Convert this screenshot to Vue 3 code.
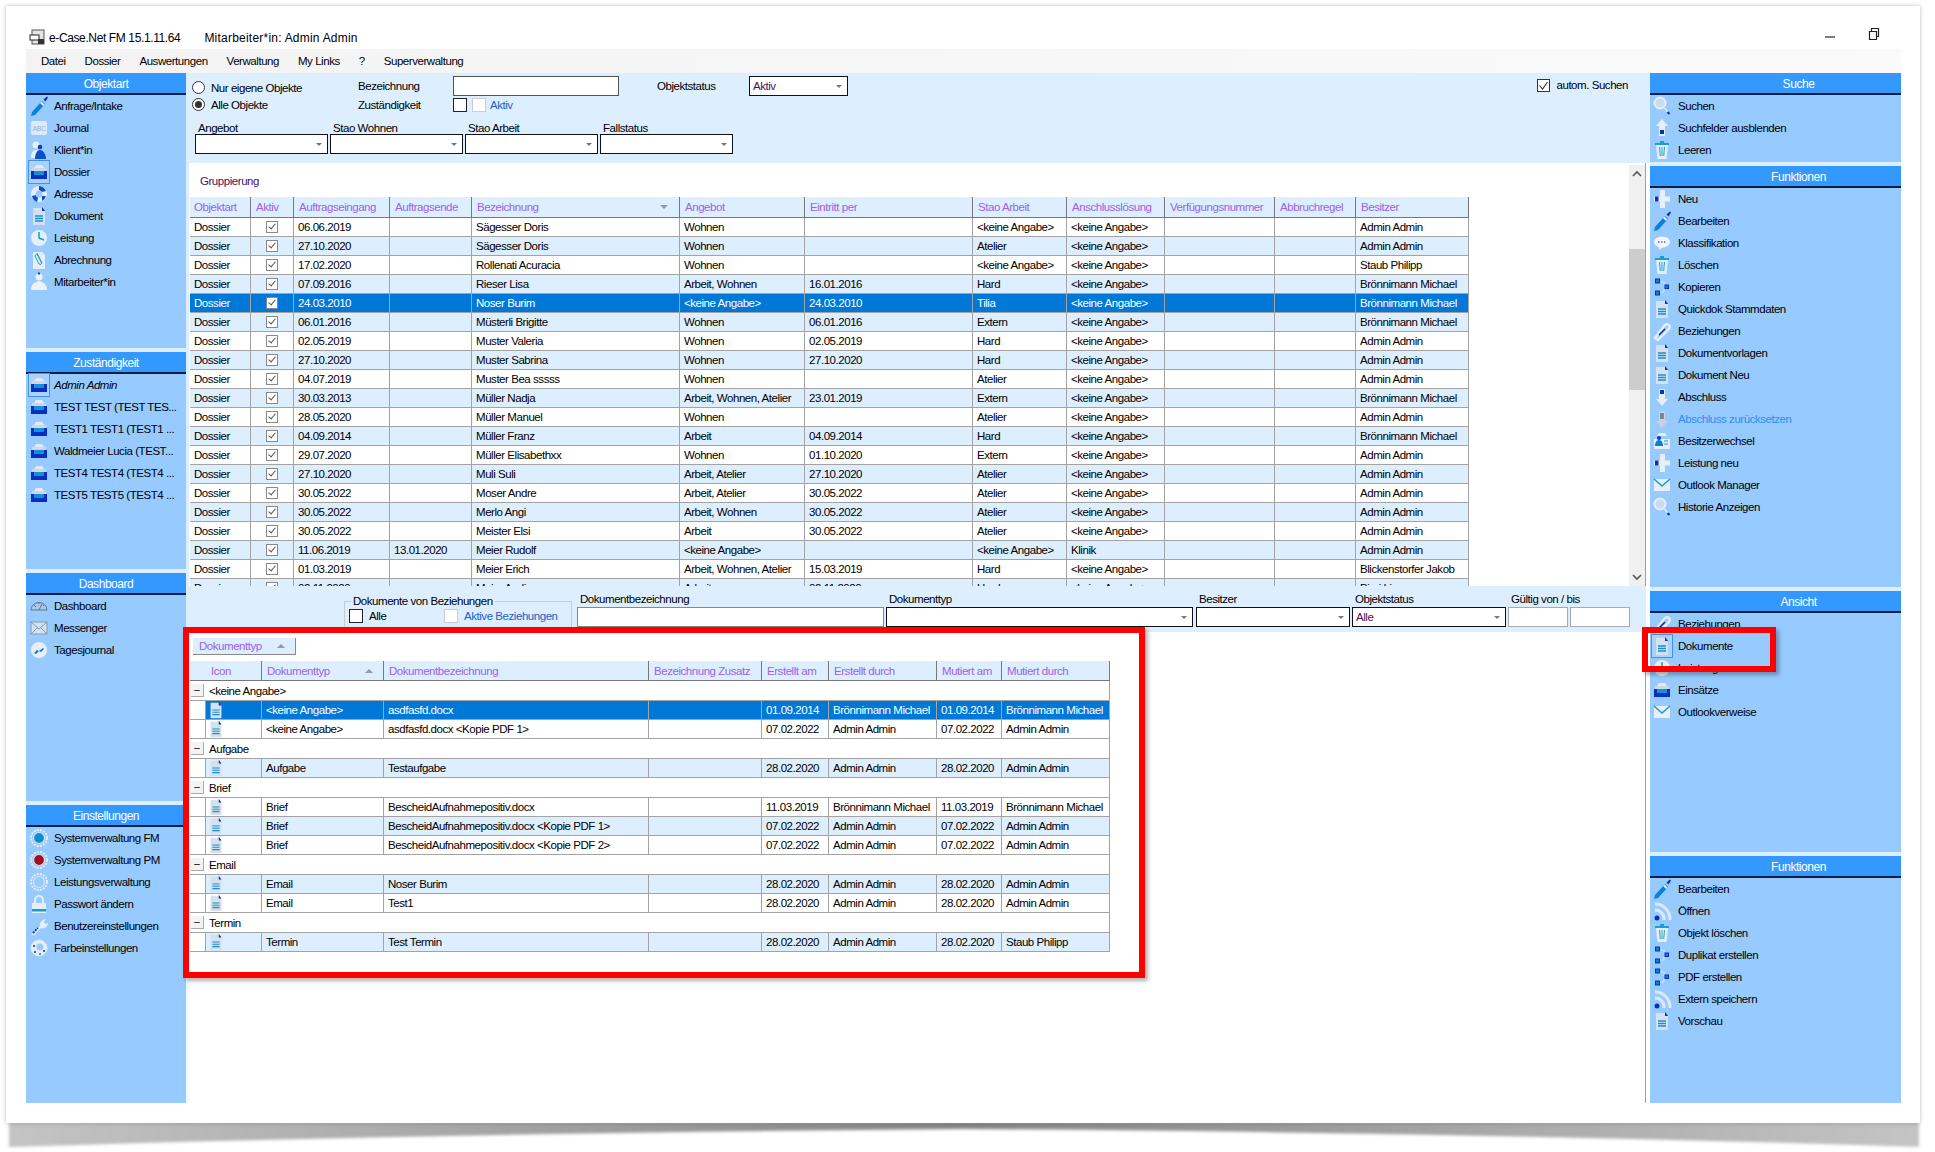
<script setup>
const doc = '<path d="M4 3h9l3 3v14H4z" fill="#d6e1ee"/><path d="M13 2l3 4h-3z" fill="#0a2fb8"/><path d="M6 11h8M6 13.500h8M6 16h8" stroke="#1a8fd0" stroke-width="1.300" fill="none"/>'
const dossier = '<path d="M5 7l2-3h6l2 3z" fill="#e2eaf3"/><path d="M3 7h14v3H3z" fill="#cfd8e2"/><path d="M2 10h16v8H2z" fill="#0530c0"/><rect x="5" y="10" width="10" height="4" fill="#1490d8"/>'
const pencil = '<path d="M3 17l-1 4 4-1 10-11-3-3z" fill="#0a7fe0"/><path d="M11 8l3 3 1.500-1.500-3-3z" fill="#dff0ff"/><path d="M14.500 4.500l3.500-3 1 1-2.500 4z" fill="#0a2fb8"/>'
const trash = '<rect x="3" y="4" width="14" height="2" fill="#1a9fd0"/><rect x="8" y="2" width="4" height="2" fill="#1a9fd0"/><path d="M4 6h12l-1.500 14h-9z" fill="#e6edf5"/><path d="M7.500 8l.8 9M10 8v9M12.500 8l-.8 9" stroke="#22a5c8" fill="none"/>'
const nodes = '<path d="M6 6h6v4M12 13v3H6" stroke="#e4ecf5" stroke-dasharray="2 1" fill="none"/><rect x="3.500" y="3" width="4" height="4" fill="#0a7fd0" stroke="#0a2fb8"/><rect x="3.500" y="15" width="4" height="4" fill="#0a7fd0" stroke="#0a2fb8"/><rect x="13" y="9" width="3.500" height="3.500" fill="#0a7fd0" stroke="#0a2fb8"/>'
const plus = '<rect x="8" y="2" width="5" height="18" fill="#e8eef5"/><rect x="2" y="8.500" width="16" height="5" fill="#e8eef5"/><rect x="3" y="8.500" width="3.500" height="5" fill="#0a2fb8"/>'
const mail = '<rect x="2" y="5" width="16" height="12" fill="#e8eef5"/><path d="M2 5l8 7 8-7" stroke="#1a9fd0" stroke-width="1.600" fill="none"/>'
const search = '<circle cx="8" cy="8" r="5.500" fill="#c8dcf0" stroke="#e6edf5" stroke-width="2"/><path d="M12.500 13l4 5" stroke="#e6edf5" stroke-width="1.500"/><path d="M15.500 17l2 2" stroke="#0a2fb8" stroke-width="2"/>'
const rss = '<path d="M3 10a9 9 0 0 1 9 10" stroke="#e0e8f2" stroke-width="3" fill="none"/><path d="M3 4a15 15 0 0 1 15 16" stroke="#e0e8f2" stroke-width="3" fill="none"/><circle cx="5" cy="18" r="2.500" fill="#0a2fb8"/>'
const gear = c => `<circle cx="10" cy="11" r="8" fill="none" stroke="#e6edf5" stroke-width="2" stroke-dasharray="2 1.200"/><circle cx="10" cy="11" r="5.500" fill="${c}" stroke="#d8e6f4" stroke-width="1.200"/>`
const icons = {
  doc, dossier, pencil, trash, nodes, plus, mail, search, rss,
  abc: '<rect x="2" y="4" width="16" height="14" rx="2" fill="#dfe9f5"/><text x="10" y="14" font-size="7" text-anchor="middle" fill="#8ab4e0" font-family="Liberation Sans">ABC</text>',
  client: '<circle cx="7" cy="6" r="3.500" fill="#e8eef5"/><path d="M2 19c0-6 2-8 5-8s5 2 5 8z" fill="#e8eef5"/><circle cx="11" cy="8" r="2.300" fill="#0a3cc0"/><path d="M6 20c0-5 2-9 5-9s6 4 6 9z" fill="#0a4fc8"/>',
  globe: '<circle cx="10" cy="11" r="8" fill="#e6edf5"/><path d="M10 3a8 8 0 0 1 7 5l-4 1-3-2zM3 13l4-1 2 3-1 4a8 8 0 0 1-5-6zM13 13l4 0a8 8 0 0 1-4 5z" fill="#0a4fc8"/><circle cx="10" cy="11" r="3.500" fill="#97caff"/>',
  clock: '<circle cx="10" cy="11" r="8" fill="#e8eef5"/><path d="M10 5v6l5 2" stroke="#0aa0d0" stroke-width="1.500" fill="none"/>',
  bill: '<path d="M4 3h9l3 3v14H4z" fill="#e6edf5"/><path d="M8 4l5 10a2 2 0 0 1-3 1L6 7a1.500 1.500 0 0 1 2.500-1l4 8" stroke="#1a9fd0" fill="none"/>',
  user: '<circle cx="10" cy="6" r="3.500" fill="#eef2f7"/><rect x="9" y="1.500" width="2" height="2" fill="#0a4fc8"/><path d="M2 19c0-5 3-8 8-9 5 1 8 4 8 9z" fill="#eef2f7"/>',
  up: '<path d="M10 2l6 7h-3v10H7V9H4z" fill="#e8eef5"/><rect x="8" y="13" width="4" height="4" fill="#0a2fb8"/>',
  down: '<path d="M10 20l6-7h-3V3H7v10H4z" fill="#e8eef5"/><rect x="8" y="4" width="4" height="4" fill="#0a2fb8"/>',
  downoff: '<path d="M10 20l6-7h-3V3H7v10H4z" fill="#c8d2de"/><rect x="8" y="5" width="4" height="6" fill="#7d8792"/>',
  chat: '<ellipse cx="10" cy="10" rx="8" ry="5.500" fill="#f2f6fb"/><path d="M7 14l0 4 4-3z" fill="#f2f6fb"/><path d="M6 10h8" stroke="#3c78c8" stroke-dasharray="1.500 1.500" stroke-width="1.500"/>',
  link: '<path d="M3 18l3 2 11-11c2-3-1-6-4-4z" fill="none" stroke="#e6edf5" stroke-width="2.500"/><path d="M7 15l6-6" stroke="#0a2fb8" stroke-width="1.600"/>',
  owner: '<rect x="2" y="9" width="16" height="10" fill="#e6edf5"/><path d="M7 3h6l2 3H5z" fill="#e6edf5"/><circle cx="7" cy="8" r="2" fill="#0a3cc0"/><path d="M3 16c0-4 2-6 4-6s4 2 4 6z" fill="#0a7fd0"/><path d="M12 11h4M12 14h4" stroke="#1a9fd0"/>',
  gauge: '<path d="M2 15a8 7.500 0 0 1 16 0z" fill="#a6c8ec" stroke="#6a7480"/><path d="M10 15l3-6M5 10l2 2M10 7v2M15 10l-1 1" stroke="#6a7480" fill="none"/>',
  envelope: '<rect x="2" y="5" width="16" height="12" fill="#cfe2f6" stroke="#8a98a8"/><path d="M2 5l8 7 8-7M2 17l6-6M18 17l-6-6" stroke="#8a98a8" fill="none"/>',
  journal: '<circle cx="10" cy="11" r="8" fill="#e8eef5"/><path d="M5 14l3-3 2 1 4-3 1 1-3 3-2-1-3 3z" fill="#0a7fd0"/>',
  gearb: gear('#0a8fd0'), gearr: gear('#a01020'), gearo: gear('#97caff'),
  lock: '<path d="M6 11V7a4 4 0 0 1 8 0v4" fill="none" stroke="#e6edf5" stroke-width="2"/><rect x="3" y="10" width="14" height="10" fill="#e8eef5"/><rect x="3" y="16" width="14" height="2.500" fill="#1a9fc0"/>',
  wrench: '<path d="M2 20l9-9c-1-3 2-7 6-7l-2 3 1 2 3-1c0 4-4 6-7 5l-7 7z" fill="#e8eef5"/><path d="M4 18l5-5" stroke="#0a2fb8" stroke-width="1.800" stroke-dasharray="2 1"/>',
  palette: '<circle cx="10" cy="11" r="8" fill="#e6edf5" stroke="#e6edf5" stroke-dasharray="2 1"/><circle cx="11" cy="10" r="3.500" fill="#97caff"/><circle cx="5" cy="9" r="1" fill="#0a2fb8"/><circle cx="6" cy="15" r="1" fill="#0a2fb8"/><circle cx="11" cy="17" r="1" fill="#0a7fd0"/><circle cx="15" cy="14" r="1" fill="#0a2fb8"/>'
}

const left = [
  { title: 'Objektart', cls: 'h276', items: [['pencil', 'Anfrage/Intake'], ['abc', 'Journal'], ['client', 'Klient*in'], ['dossier', 'Dossier', 'active'], ['globe', 'Adresse'], ['doc', 'Dokument'], ['clock', 'Leistung'], ['bill', 'Abrechnung'], ['user', 'Mitarbeiter*in']] },
  { title: 'Zuständigkeit', cls: 'h217', items: [['dossier', 'Admin Admin', 'active ital'], ['dossier', 'TEST TEST (TEST TES...'], ['dossier', 'TEST1 TEST1 (TEST1 ...'], ['dossier', 'Waldmeier Lucia (TEST...'], ['dossier', 'TEST4 TEST4 (TEST4 ...'], ['dossier', 'TEST5 TEST5 (TEST4 ...']] },
  { title: 'Dashboard', cls: 'h228', items: [['gauge', 'Dashboard'], ['envelope', 'Messenger'], ['journal', 'Tagesjournal']] },
  { title: 'Einstellungen', cls: 'grow', items: [['gearb', 'Systemverwaltung FM'], ['gearr', 'Systemverwaltung PM'], ['gearo', 'Leistungsverwaltung'], ['lock', 'Passwort ändern'], ['wrench', 'Benutzereinstellungen'], ['palette', 'Farbeinstellungen']] }
]
const right = [
  { title: 'Suche', cls: 'h90', items: [['search', 'Suchen'], ['up', 'Suchfelder ausblenden'], ['trash', 'Leeren']] },
  { title: 'Funktionen', cls: 'h420', items: [['plus', 'Neu'], ['pencil', 'Bearbeiten'], ['chat', 'Klassifikation'], ['trash', 'Löschen'], ['nodes', 'Kopieren'], ['doc', 'Quickdok Stammdaten'], ['link', 'Beziehungen'], ['doc', 'Dokumentvorlagen'], ['doc', 'Dokument Neu'], ['down', 'Abschluss'], ['downoff', 'Abschluss zurücksetzen', 'off'], ['owner', 'Besitzerwechsel'], ['plus', 'Leistung neu'], ['mail', 'Outlook Manager'], ['search', 'Historie Anzeigen']] },
  { title: 'Ansicht', cls: 'h261', items: [['link', 'Beziehungen'], ['doc', 'Dokumente', 'active'], ['clock', 'Leistung'], ['dossier', 'Einsätze'], ['mail', 'Outlookverweise']] },
  { title: 'Funktionen', cls: 'grow', items: [['pencil', 'Bearbeiten'], ['rss', 'Öffnen'], ['trash', 'Objekt löschen'], ['nodes', 'Duplikat erstellen'], ['nodes', 'PDF erstellen'], ['rss', 'Extern speichern'], ['doc', 'Vorschau']] }
]

const KA = '<keine Angabe>', AA = 'Admin Admin', BM = 'Brönnimann Michael'
const heads = ['Objektart', 'Aktiv', 'Auftragseingang', 'Auftragsende', 'Bezeichnung', 'Angebot', 'Eintritt per', 'Stao Arbeit', 'Anschlusslösung', 'Verfügungsnummer', 'Abbruchregel', 'Besitzer']
const rows = [
  ['06.06.2019', '', 'Sägesser Doris', 'Wohnen', '', KA, KA, AA],
  ['27.10.2020', '', 'Sägesser Doris', 'Wohnen', '', 'Atelier', KA, AA],
  ['17.02.2020', '', 'Rollenati Acuracia', 'Wohnen', '', KA, KA, 'Staub Philipp'],
  ['07.09.2016', '', 'Rieser Lisa', 'Arbeit, Wohnen', '16.01.2016', 'Hard', KA, BM],
  ['24.03.2010', '', 'Noser Burim', KA, '24.03.2010', 'Tilia', KA, BM],
  ['06.01.2016', '', 'Müsterli Brigitte', 'Wohnen', '06.01.2016', 'Extern', KA, BM],
  ['02.05.2019', '', 'Muster Valeria', 'Wohnen', '02.05.2019', 'Hard', KA, AA],
  ['27.10.2020', '', 'Muster Sabrina', 'Wohnen', '27.10.2020', 'Hard', KA, AA],
  ['04.07.2019', '', 'Muster Bea sssss', 'Wohnen', '', 'Atelier', KA, AA],
  ['30.03.2013', '', 'Müller Nadja', 'Arbeit, Wohnen, Atelier', '23.01.2019', 'Extern', KA, BM],
  ['28.05.2020', '', 'Müller Manuel', 'Wohnen', '', 'Atelier', KA, AA],
  ['04.09.2014', '', 'Müller Franz', 'Arbeit', '04.09.2014', 'Hard', KA, BM],
  ['29.07.2020', '', 'Müller Elisabethxx', 'Wohnen', '01.10.2020', 'Extern', KA, AA],
  ['27.10.2020', '', 'Muli Suli', 'Arbeit, Atelier', '27.10.2020', 'Atelier', KA, AA],
  ['30.05.2022', '', 'Moser Andre', 'Arbeit, Atelier', '30.05.2022', 'Atelier', KA, AA],
  ['30.05.2022', '', 'Merlo Angi', 'Arbeit, Wohnen', '30.05.2022', 'Atelier', KA, AA],
  ['30.05.2022', '', 'Meister Elsi', 'Arbeit', '30.05.2022', 'Atelier', KA, AA],
  ['11.06.2019', '13.01.2020', 'Meier Rudolf', KA, '', KA, 'Klinik', AA],
  ['01.03.2019', '', 'Meier Erich', 'Arbeit, Wohnen, Atelier', '15.03.2019', 'Hard', KA, 'Blickenstorfer Jakob'],
  ['02.11.2020', '', 'Meier Andi', 'Arbeit', '02.11.2020', 'Hard', KA, 'Bieri Lia']
]
const docHeads = ['Icon', 'Dokumenttyp', 'Dokumentbezeichnung', 'Bezeichnung Zusatz', 'Erstellt am', 'Erstellt durch', 'Mutiert am', 'Mutiert durch']
const groups = [
  { name: KA, rows: [
    { c: [KA, 'asdfasfd.docx', '01.09.2014', BM, '01.09.2014', BM], cls: 'sel' },
    { c: [KA, 'asdfasfd.docx <Kopie PDF 1>', '07.02.2022', AA, '07.02.2022', AA], cls: '' }] },
  { name: 'Aufgabe', rows: [{ c: ['Aufgabe', 'Testaufgabe', '28.02.2020', AA, '28.02.2020', AA], cls: 'alt' }] },
  { name: 'Brief', rows: [
    { c: ['Brief', 'BescheidAufnahmepositiv.docx', '11.03.2019', BM, '11.03.2019', BM], cls: '' },
    { c: ['Brief', 'BescheidAufnahmepositiv.docx <Kopie PDF 1>', '07.02.2022', AA, '07.02.2022', AA], cls: 'alt' },
    { c: ['Brief', 'BescheidAufnahmepositiv.docx <Kopie PDF 2>', '07.02.2022', AA, '07.02.2022', AA], cls: '' }] },
  { name: 'Email', rows: [
    { c: ['Email', 'Noser Burim', '28.02.2020', AA, '28.02.2020', AA], cls: 'alt' },
    { c: ['Email', 'Test1', '28.02.2020', AA, '28.02.2020', AA], cls: '' }] },
  { name: 'Termin', rows: [{ c: ['Termin', 'Test Termin', '28.02.2020', AA, '28.02.2020', 'Staub Philipp'], cls: 'alt' }] }
]
const rowClass = i => (i === 4 ? 'sel' : i % 2 ? 'alt' : '')
</script>

<template>
  <div class="page">
    <svg class="shadow" width="1935" height="36" viewBox="0 0 1935 36">
      <defs>
        <linearGradient id="sh" x1="0" x2="1" y1="0" y2="0">
          <stop offset="0" stop-color="#c4c4c4" />
          <stop offset="0.5" stop-color="#858585" />
          <stop offset="1" stop-color="#c4c4c4" />
        </linearGradient>
        <filter id="bl"><feGaussianBlur stdDeviation="1.500" /></filter>
      </defs>
      <path d="M9 3H1919V28Q1500 14 965 10Q450 14 9 28Z" fill="url(#sh)" filter="url(#bl)" />
    </svg>
    <div class="window">
      <div class="titlebar">
        <svg class="appicon" width="16" height="16" viewBox="0 0 16 16">
          <rect x="3" y="1" width="12" height="14" fill="#e4e4e4" stroke="#555" />
          <rect x="1" y="6" width="9" height="5" fill="#fff" stroke="#222" />
          <rect x="9" y="10" width="6" height="5" fill="#333" />
        </svg>
        <span class="apptitle">e-Case.Net FM 15.1.11.64</span>
        <span class="appuser">Mitarbeiter*in: Admin Admin</span>
        <span class="spacer"></span>
        <svg class="winbtn minbtn" width="12" height="12" viewBox="0 0 12 12"><path d="M1 8h10" stroke="#222" stroke-width="1.200" /></svg>
        <svg class="winbtn" width="12" height="14" viewBox="0 0 12 14"><path d="M1.500 4.500h7v8h-7zM3.500 4.500v-3h7v8h-2" fill="none" stroke="#222" stroke-width="1.200" /></svg>
      </div>
      <div class="menubar">
        <span v-for="m in ['Datei', 'Dossier', 'Auswertungen', 'Verwaltung', 'My Links', '?', 'Superverwaltung']" :key="m">{{ m }}</span>
      </div>
      <div class="body">
        <aside class="side leftside">
          <section v-for="s in left" :key="s.title" class="panel" :class="s.cls">
            <header class="phead">{{ s.title }}</header>
            <div v-for="it in s.items" :key="it[1]" class="pitem" :class="it[2]">
              <svg class="slot" viewBox="0 0 20 22" width="20" height="22" v-html="icons[it[0]]"></svg>
              <span>{{ it[1] }}</span>
            </div>
          </section>
        </aside>

        <main class="center">
          <div class="filter">
            <div class="ftop">
              <div class="fradios">
                <label class="radio"><i class="rcircle"></i>Nur eigene Objekte</label>
                <label class="radio"><i class="rcircle on"></i>Alle Objekte</label>
              </div>
              <div class="flabels">
                <span>Bezeichnung</span>
                <span>Zuständigkeit</span>
              </div>
              <div class="ffields">
                <div class="input w166"></div>
                <div class="zrow">
                  <i class="cbox"></i><i class="cbox dim"></i><span class="blue">Aktiv</span>
                </div>
              </div>
              <div class="statuslabel">Objektstatus</div>
              <div class="select w99"><span class="purpledark">Aktiv</span><i class="caret"></i></div>
              <span class="spacer"></span>
              <label class="autom">
                <svg width="13" height="13" viewBox="0 0 13 13"><rect x=".5" y=".5" width="12" height="12" fill="#fff" stroke="#333" /><path d="M2.500 6.500l3 3.500 5-7" fill="none" stroke="#333" stroke-width="1.100" /></svg>
                autom. Suchen
              </label>
            </div>
            <div class="fselects">
              <div v-for="l in ['Angebot', 'Stao Wohnen', 'Stao Arbeit', 'Fallstatus']" :key="l" class="fsel">
                <span class="flab">{{ l }}</span>
                <div class="select w133"><i class="caret"></i></div>
              </div>
            </div>
          </div>

          <div class="gridwrap">
            <div class="gridscroll">
              <div class="gruppe">Gruppierung</div>
              <div class="mg ghead">
                <div v-for="h in heads" :key="h" class="hc">{{ h }}<i v-if="h === 'Bezeichnung'" class="sortdown"></i></div>
              </div>
              <div v-for="(r, i) in rows" :key="i" class="mg grow-row" :class="rowClass(i)">
                <div class="c">Dossier</div>
                <div class="c cc"><i class="tick"></i></div>
                <div class="c">{{ r[0] }}</div>
                <div class="c">{{ r[1] }}</div>
                <div class="c">{{ r[2] }}</div>
                <div class="c">{{ r[3] }}</div>
                <div class="c">{{ r[4] }}</div>
                <div class="c">{{ r[5] }}</div>
                <div class="c">{{ r[6] }}</div>
                <div class="c"></div>
                <div class="c"></div>
                <div class="c">{{ r[7] }}</div>
              </div>
            </div>
            <div class="scrollbar">
              <div class="sarrow">
                <svg width="10" height="7" viewBox="0 0 10 7"><path d="M1 6l4-4 4 4" fill="none" stroke="#555" stroke-width="1.600" /></svg>
              </div>
              <div class="sthumb"></div>
              <span class="spacer"></span>
              <div class="sarrow">
                <svg width="10" height="7" viewBox="0 0 10 7"><path d="M1 1l4 4 4-4" fill="none" stroke="#555" stroke-width="1.600" /></svg>
              </div>
            </div>
          </div>

          <div class="lowfilter">
            <fieldset class="relbox">
              <legend>Dokumente von Beziehungen</legend>
              <div class="relrow">
                <i class="cbox"></i><span class="alle">Alle</span>
                <i class="cbox dim"></i><span class="blue">Aktive Beziehungen</span>
              </div>
            </fieldset>
            <div class="lf w307 m5"><span class="flab">Dokumentbezeichnung</span><div class="input soft"></div></div>
            <div class="lf w307 m2"><span class="flab">Dokumenttyp</span><div class="select"><i class="caret"></i></div></div>
            <div class="lf w154 m3"><span class="flab">Besitzer</span><div class="select"><i class="caret"></i></div></div>
            <div class="lf w154 m2"><span class="flab">Objektstatus</span><div class="select"><span class="purpledark">Alle</span><i class="caret"></i></div></div>
            <div class="lf w60 m2"><span class="flab">Gültig von / bis</span><div class="input thin"></div></div>
            <div class="lf w60 m2"><span class="flab">&nbsp;</span><div class="input thin"></div></div>
          </div>

          <div class="docs">
            <div class="chip">Dokumenttyp<i class="sortup"></i></div>
            <div class="dg dhead">
              <div v-for="h in docHeads" :key="h" class="hc" :class="{ iconhead: h === 'Icon' }">{{ h }}<i v-if="h === 'Dokumenttyp'" class="sortup"></i></div>
            </div>
            <template v-for="g in groups" :key="g.name">
              <div class="grp"><i class="minus">−</i><span>{{ g.name }}</span></div>
              <div v-for="(r, i) in g.rows" :key="i" class="dg drow" :class="r.cls">
                <div class="indent"></div>
                <div class="c iconcell"><svg viewBox="0 0 20 22" width="20" height="20" v-html="icons.doc"></svg></div>
                <div class="c">{{ r.c[0] }}</div>
                <div class="c">{{ r.c[1] }}</div>
                <div class="c"></div>
                <div class="c">{{ r.c[2] }}</div>
                <div class="c">{{ r.c[3] }}</div>
                <div class="c">{{ r.c[4] }}</div>
                <div class="c">{{ r.c[5] }}</div>
              </div>
            </template>
          </div>
        </main>

        <aside class="side rightside">
          <section v-for="s in right" :key="s.title + s.cls" class="panel" :class="s.cls">
            <header class="phead">{{ s.title }}</header>
            <div v-for="it in s.items" :key="it[1]" class="pitem" :class="it[2]">
              <svg class="slot" viewBox="0 0 20 22" width="20" height="22" v-html="icons[it[0]]"></svg>
              <span>{{ it[1] }}</span>
            </div>
          </section>
        </aside>
      </div>
    </div>
    <div class="redbox box1"></div>
    <div class="redbox box2"></div>
  </div>
</template>

<style>
html, body { margin: 0; background: #fff; }
</style>

<style scoped>
.page {
  position: relative;
  width: 1935px;
  height: 1152px;
  box-sizing: border-box;
  padding: 6px 15px 29px 6px;
  overflow: hidden;
  background: #fff;
  font-family: "Liberation Sans", Arial, sans-serif;
  font-size: 11.5px;
  letter-spacing: -0.45px;
  color: #000;
}
i { font-style: normal; display: block; }
.spacer { flex: 1; }
.shadow { position: absolute; left: 0; top: 1119px; }
.window {
  position: relative;
  height: 100%;
  box-sizing: border-box;
  padding: 0 19px 20px 20px;
  display: flex;
  flex-direction: column;
  background: #fff;
  box-shadow: 0 0 4px rgba(0, 0, 0, .28);
}
.titlebar {
  height: 43px;
  flex: none;
  display: flex;
  align-items: flex-end;
  padding: 0 0 4px 3px;
  box-sizing: border-box;
  font-size: 12px;
  line-height: 14px;
}
.appicon { margin: 0 4px 0 0; }
.apptitle { letter-spacing: -0.38px; }
.appuser { margin-left: 24px; letter-spacing: 0.22px; }
.winbtn { margin-bottom: 4px; margin-right: 21px; }
.minbtn { margin-right: 32px; }
.menubar {
  height: 24px;
  flex: none;
  display: flex;
  align-items: center;
  gap: 19px;
  padding-left: 15px;
  background: linear-gradient(90deg, #f3f3f3, #fafafa);
}
.body { flex: 1; min-height: 0; display: flex; }
.side {
  flex: none;
  display: flex;
  flex-direction: column;
  background: #ddeeff;
}
.leftside { width: 160px; gap: 4px; }
.rightside { width: 251px; gap: 4px; }
.panel { background: #97caff; overflow: hidden; }
.h276 { height: 275px; }
.h217 { height: 217px; }
.h228 { height: 228px; }
.h90 { height: 89px; }
.h420 { height: 421px; }
.h261 { height: 261px; }
.grow { flex: 1; }
.phead {
  height: 22px;
  box-sizing: border-box;
  border-bottom: 2px solid #0a1f40;
  background: #3399ff;
  color: #fff;
  text-align: center;
  font-size: 12px;
  line-height: 22px;
}
.rightside .phead { padding-left: 46px; }
.pitem {
  height: 22px;
  display: flex;
  align-items: center;
  gap: 5px;
  padding-left: 3px;
  white-space: nowrap;
}
.rightside .pitem { padding-left: 2px; gap: 6px; }
.pitem.active .slot { outline: 1px solid #4a90e0; background: #a8d2ff; }
.pitem.ital { font-style: italic; }
.pitem.off { color: #2f8cf5; }
.slot { flex: none; }

.center {
  flex: 1;
  min-width: 0;
  display: flex;
  flex-direction: column;
  background: #fff;
}
.filter {
  height: 90px;
  flex: none;
  background: #ddeeff;
  box-sizing: border-box;
  padding-top: 3px;
}
.ftop { height: 46px; display: flex; align-items: flex-start; padding-left: 6px; }
.fradios { width: 166px; padding-top: 3px; }
.radio { display: flex; align-items: center; height: 17px; gap: 6px; }
.rcircle {
  width: 11px; height: 11px;
  border: 1px solid #333;
  border-radius: 50%;
  background: #fff;
  position: relative;
}
.rcircle.on::after {
  content: "";
  position: absolute;
  left: 2px; top: 2px;
  width: 7px; height: 7px;
  border-radius: 50%;
  background: #333;
}
.flabels { width: 95px; display: flex; flex-direction: column; gap: 6px; padding-top: 4px; line-height: 13px; }
.ffields { width: 204px; }
.input {
  height: 20px;
  box-sizing: border-box;
  background: #fff;
  border: 1px solid #555;
}
.input.thin { border-color: #aaa; }
.input.soft { border-color: #888; }
.w166 { width: 166px; }
.zrow { display: flex; align-items: center; gap: 4px; margin-top: 2px; height: 13px; }
.cbox { width: 12px; height: 12px; border: 1px solid #222; background: #fff; flex: none; }
.cbox.dim { border-color: #ccc; margin-left: 1px; }
.blue { color: #1a62c8; }
.statuslabel { width: 92px; padding-top: 4px; line-height: 13px; }
.select {
  height: 20px;
  box-sizing: border-box;
  background: #fff;
  border: 1px solid #111;
  display: flex;
  align-items: center;
  padding: 0 3px;
  position: relative;
}
.w99 { width: 99px; flex: none; }
.w133 { width: 133px; }
.caret {
  position: absolute;
  right: 5px; top: 8px;
  border-left: 3px solid transparent;
  border-right: 3px solid transparent;
  border-top: 3px solid #777;
}
.purpledark { color: #46105a; }
.autom { display: flex; align-items: center; gap: 6px; padding: 3px 22px 0 0; line-height: 13px; }
.fselects { display: flex; gap: 2px; padding-left: 9px; }
.fsel { width: 133px; }
.flab { display: block; line-height: 12px; padding-left: 3px; white-space: nowrap; }

.gridwrap {
  height: 423px;
  flex: none;
  display: flex;
  box-sizing: border-box;
  border-left: 3px solid #ddeeff;
  border-right: 1px solid #a0a0a0;
  margin-right: 4px;
  padding-left: 1px;
}
.gridscroll { flex: 1; min-width: 0; overflow: hidden; }
.gruppe { height: 34px; padding: 11px 0 0 10px; box-sizing: border-box; color: #4a1060; line-height: 14px; }
.mg {
  display: grid;
  grid-template-columns: 61px 43px 96px 82px 208px 125px 168px 94px 98px 110px 81px 113px;
  width: 1279px;
}
.dg {
  display: grid;
  grid-template-columns: 16px 56px 122px 265px 113px 67px 108px 65px 108px;
  width: 920px;
}
.ghead, .dhead { height: 21px; background: #ddeeff; border-bottom: 1px solid #777; box-sizing: border-box; }
.dhead { grid-template-columns: 72px 122px 265px 113px 67px 108px 65px 108px; height: 20px; border-right: 1px solid #888; }
.hc {
  color: #9a62ea;
  border-right: 1px solid #777;
  line-height: 20px;
  padding-left: 5px;
  white-space: nowrap;
  display: flex;
  align-items: center;
  justify-content: space-between;
  padding-right: 8px;
}
.hc:first-child { padding-left: 4px; }
.hc.iconhead { padding-left: 21px; }
.sortdown { border-left: 4px solid transparent; border-right: 4px solid transparent; border-top: 4px solid #999; margin-right: 3px; }
.sortup { border-left: 4px solid transparent; border-right: 4px solid transparent; border-bottom: 4px solid #999; margin-right: 2px; }
.grow-row, .drow { height: 19px; box-sizing: border-box; border-bottom: 1px solid #a3a3a3; background: #fff; }
.c {
  border-right: 1px solid #a3a3a3;
  padding-left: 4px;
  line-height: 18px;
  white-space: nowrap;
  overflow: hidden;
}
.cc { display: flex; align-items: center; justify-content: center; padding: 0; }
.alt { background: #ddeeff; }
.sel { background: #0078d7; color: #fff; }
.tick {
  width: 10px; height: 10px;
  border: 1px solid #888;
  background: #fff;
  position: relative;
}
.tick::after {
  content: "";
  position: absolute;
  left: 3px; top: 0;
  width: 3px; height: 6px;
  border: solid #555;
  border-width: 0 1.500px 1.500px 0;
  transform: rotate(40deg);
}
.scrollbar {
  width: 16px;
  flex: none;
  margin: 2px 0 0 0;
  background: #f0f0f0;
  display: flex;
  flex-direction: column;
}
.sarrow { height: 17px; display: flex; align-items: center; justify-content: center; flex: none; }
.sthumb { height: 141px; margin-top: 67px; background: #cdcdcd; flex: none; }

.lowfilter {
  height: 46px;
  flex: none;
  box-sizing: border-box;
  background: #ddeeff;
  margin-right: 4px;
  display: flex;
  align-items: flex-end;
  padding: 0 0 5px 158px;
}
.relbox {
  width: 228px;
  height: 37px;
  box-sizing: border-box;
  margin: 0 0 -5px;
  padding: 0 0 0 4px;
  border: 1px solid #ccc;
  border-bottom: none;
  flex: none;
}
.relbox legend { padding: 0 2px; margin-left: 2px; line-height: 12px; }
.relrow { display: flex; align-items: center; height: 17px; gap: 6px; }
.alle { width: 68px; }
.lf { flex: none; }
.w307 { width: 307px; }
.w154 { width: 154px; }
.w60 { width: 60px; }
.m5 { margin-left: 5px; }
.m2 { margin-left: 2px; }
.m3 { margin-left: 3px; }
.lf .flab { margin-bottom: 2px; }

.docs {
  flex: 1;
  min-height: 0;
  border-left: 3px solid #f4f9ff;
  border-right: 1px solid #a0a0a0;
  margin-right: 4px;
  padding: 6px 0 0 1px;
}
.chip {
  width: 103px;
  height: 17px;
  box-sizing: border-box;
  margin: 0 0 6px 3px;
  padding: 0 8px 0 6px;
  background: #ddeeff;
  border-bottom: 1px solid #888;
  border-right: 1px solid #888;
  color: #9a62ea;
  display: flex;
  align-items: center;
  justify-content: space-between;
}
.grp {
  width: 920px;
  height: 20px;
  box-sizing: border-box;
  border-bottom: 1px solid #a3a3a3;
  border-right: 1px solid #a3a3a3;
  display: flex;
  align-items: center;
  gap: 5px;
  padding-left: 1px;
  background: #fff;
}
.minus {
  width: 13px;
  height: 13px;
  box-sizing: border-box;
  border-right: 1px solid #aaa;
  border-bottom: 1px solid #aaa;
  background: #f3f3f3;
  text-align: center;
  line-height: 12px;
  color: #111;
}
.indent { background: #fff; border-right: 1px solid #a3a3a3; }
.iconcell { padding: 0; display: flex; align-items: center; }
.redbox {
  position: absolute;
  box-sizing: border-box;
  border: 6px solid #f00;
  box-shadow: 3px 3px 4px rgba(0, 0, 0, .3);
  pointer-events: none;
}
.box1 { left: 183px; top: 627px; width: 962px; height: 351px; }
.box2 { left: 1642px; top: 627px; width: 134px; height: 45px; }
</style>
